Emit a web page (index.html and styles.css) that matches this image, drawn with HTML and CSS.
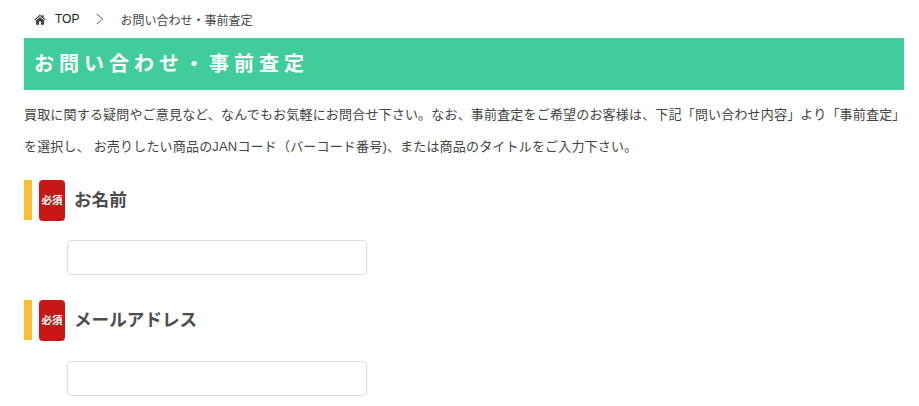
FILE: index.html
```html
<!DOCTYPE html>
<html lang="ja">
<head>
  <meta charset="UTF-8">
  <meta name="viewport" content="width=device-width, initial-scale=1">
  <title>お問い合わせ・事前査定</title>
  <link rel="stylesheet" href="styles.css">
</head>
<body>
  <nav class="breadcrumb">
    <svg class="home-icon" viewBox="0 0 12 11" aria-hidden="true">
      <path d="M6 0.5 L0.3 5.6 L1 6.4 L6 2 L11 6.4 L11.7 5.6 L9.6 3.7 V1 H8.2 V2.5 Z"/>
      <path d="M6 3 L2 6.5 V10.8 H5 V7.6 H7 V10.8 H10 V6.5 Z"/>
    </svg>
    <a class="top-link" href="#">TOP</a>
    <svg class="chevron" viewBox="0 0 8 12" aria-hidden="true">
      <path d="M0.6 1 L6.8 6 L0.6 11" fill="none" stroke="#666" stroke-width="1"/>
    </svg>
    <span>お問い合わせ・事前査定</span>
  </nav>

  <h1 class="page-title">お問い合わせ・事前査定</h1>

  <p class="lead">買取に関する疑問やご意見など、なんでもお気軽にお問合せ下さい。なお、事前査定をご希望のお客様は、下記「問い合わせ内容」より「事前査定」を選択し、 お売りしたい商品のJANコード（バーコード番号)、または商品のタイトルをご入力下さい。</p>

  <form class="contact-form">
    <div class="field">
      <label class="field-label" for="name">
        <span class="field-bar"></span>
        <span class="required">必須</span>
        <span class="field-name">お名前</span>
      </label>
      <input class="text-input" type="text" id="name">
    </div>
    <div class="field">
      <label class="field-label" for="email">
        <span class="field-bar"></span>
        <span class="required">必須</span>
        <span class="field-name">メールアドレス</span>
      </label>
      <input class="text-input" type="text" id="email">
    </div>
  </form>
</body>
</html>
```

FILE: styles.css
```css
*, *::before, *::after {
  box-sizing: border-box;
}
body {
  margin: 0;
  padding: 0 15px 0 24px;
  height: 406px;
  overflow: hidden;
  background: #fff;
  color: #444;
  font-family: "Liberation Sans", "Noto Sans CJK JP", sans-serif;
}
/* Breadcrumb */
.breadcrumb {
  display: flex;
  align-items: center;
  height: 38px;
  padding-left: 10px;
  font-size: 12px;
  color: #444;
}
.home-icon {
  width: 12px;
  height: 11px;
  fill: #444;
}
.top-link {
  margin-left: 9px;
  color: #222;
  text-decoration: none;
}
.chevron {
  width: 8px;
  height: 12px;
  margin: 0 16px 0 17px;
}
/* Banner heading */
.page-title {
  margin: 0;
  height: 52px;
  padding-left: 10px;
  background: #41cd9b;
  color: #fff;
  font-size: 20px;
  line-height: 52px;
  font-weight: bold;
  letter-spacing: 5px;
}
.lead {
  margin: 9px 0 0;
  font-size: 13px;
  line-height: 32px;
  letter-spacing: 0.18px;
  color: #444;
}
/* Form */
.contact-form {
  margin-top: 16.6px;
}
.field {
  margin-bottom: 25px;
}
.field-label {
  display: flex;
  height: 41px;
  font-size: 17.6px;
  font-weight: bold;
  color: #4d4d4d;
}
.field-bar {
  width: 8px;
  height: 40px;
  margin-right: 7px;
  background: #fabd37;
}
.required {
  width: 26px;
  height: 41px;
  margin-right: 9px;
  border-radius: 4px;
  background: #c81616;
  color: #fff;
  font-family: "Liberation Serif", "Noto Sans CJK JP", serif;
  font-size: 10.5px;
  font-weight: bold;
  line-height: 42px;
  text-align: center;
  white-space: nowrap;
}
.field-name {
  line-height: 40px;
}
.text-input {
  display: block;
  width: 300px;
  height: 35px;
  margin: 19.5px 0 0 43px;
  border: 1px solid #ddd;
  border-radius: 4px;
  background: #fff;
}
```
